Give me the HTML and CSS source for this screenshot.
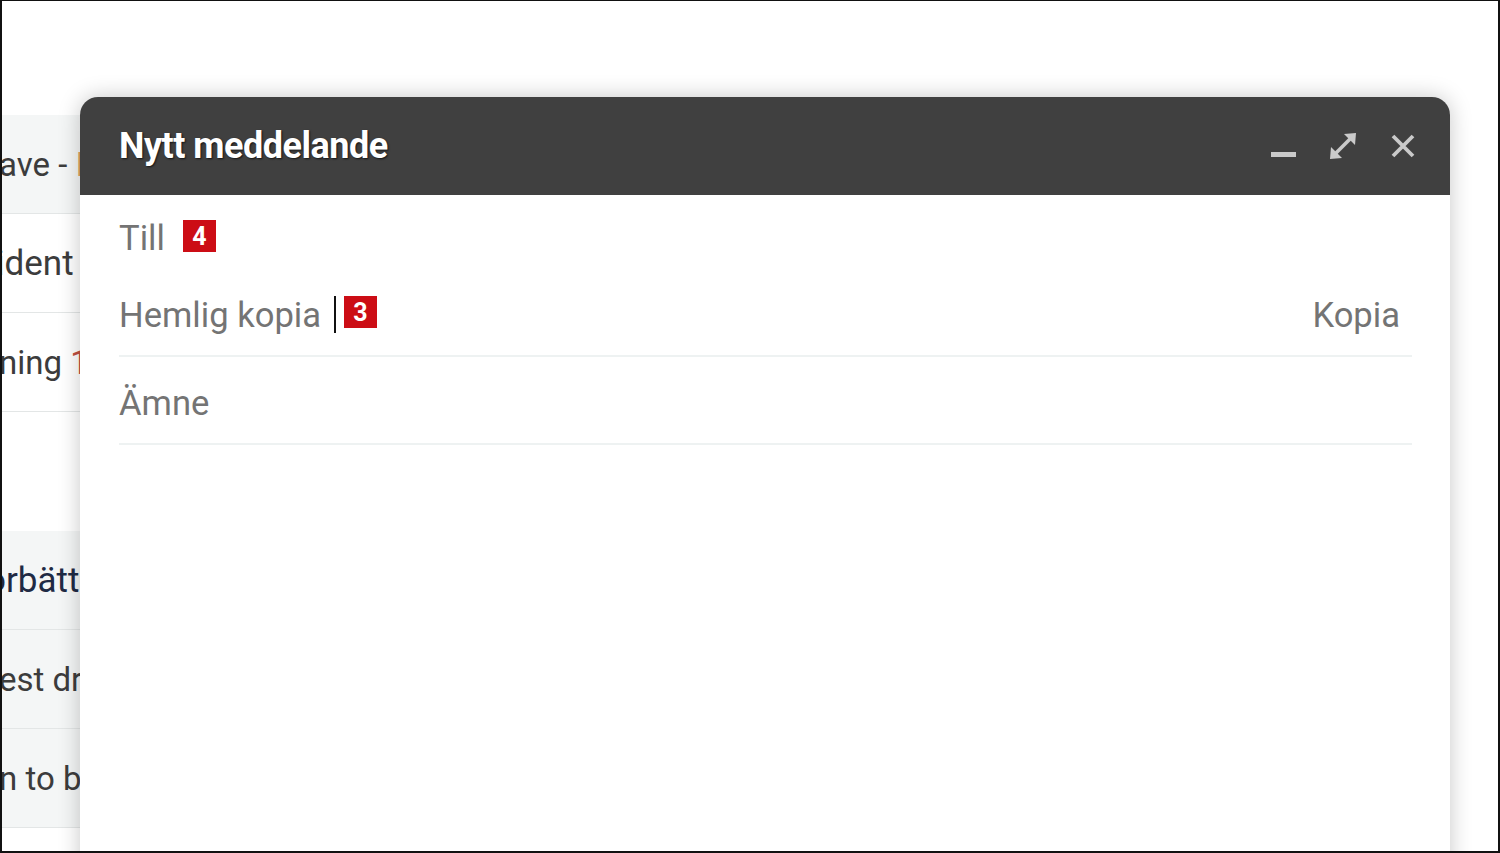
FILE: index.html
```html
<!DOCTYPE html>
<html lang="sv">
<head>
    <meta charset="UTF-8">
    <title>Nytt meddelande</title>
    <link rel="stylesheet" href="styles.css">
</head>
<body>
    <div class="frame">
        <div class="inbox">
            <div class="row shade"><span class="cut">ave - <span class="tag-orange">I</span></span></div>
            <div class="row"><span class="cut shift">ident</span></div>
            <div class="row"><span class="cut">ning <span class="tag-red">1</span></span></div>
            <div class="row tall"></div>
            <div class="row shade"><span class="cut navy wide">örbätt</span></div>
            <div class="row shade"><span class="cut">est dr<span class="tag-orange">i</span></span></div>
            <div class="row shade"><span class="cut">n to b</span></div>
        </div>

        <div class="compose">
            <div class="compose-head">
                <div class="compose-title">Nytt meddelande</div>
                <div class="head-icons">
                    <svg class="icon" width="28" height="28" viewBox="0 0 28 28"><rect x="2" y="20" width="25" height="5" fill="#cacaca"/></svg>
                    <svg class="icon" width="28" height="28" viewBox="0 0 28 28">
                        <line x1="6" y1="22" x2="22" y2="6" stroke="#cacaca" stroke-width="3.5"/>
                        <polygon points="15,2 27,1 26,13" fill="#cacaca"/>
                        <polygon points="2,15 1,27 13,26" fill="#cacaca"/>
                    </svg>
                    <svg class="icon" width="28" height="28" viewBox="0 0 28 28">
                        <path d="M4 4 L24 24 M24 4 L4 24" stroke="#cacaca" stroke-width="3.8"/>
                    </svg>
                </div>
            </div>
            <div class="compose-body">
                <div class="field first">
                    <span class="label">Till</span>
                    <span class="badge">4</span>
                </div>
                <div class="field lined">
                    <span class="label">Hemlig kopia</span>
                    <span class="caret"></span>
                    <span class="badge">3</span>
                    <span class="label right">Kopia</span>
                </div>
                <div class="field lined subject">
                    <span class="label">Ämne</span>
                </div>
            </div>
        </div>
    </div>
</body>
</html>
```

FILE: styles.css
```css
body { margin: 0; background: #fff; font-family: Roboto, "Liberation Sans", sans-serif; }
.frame { position: relative; width: 1500px; height: 853px; box-sizing: border-box; border: 2px solid #111; border-top-width: 1px; overflow: hidden; background: #fff; }

.inbox { padding-top: 114px; width: 1440px; }
.row { height: 98px; border-bottom: 1px solid #e3e6e6; display: flex; align-items: center; font-size: 33px; color: #3c3c3c; white-space: nowrap; }
.row.tall { height: 119px; border-bottom: none; }
.row.shade { background: #f4f6f6; }
.cut { margin-left: -3px; }
.cut.shift { margin-left: -6px; font-size: 35px; }
.cut.wide { margin-left: -16px; font-size: 35px; }
.navy { color: #1f2a44; }
.tag-orange { color: #e0a060; }
.tag-red { color: #c05040; }

.compose { position: absolute; left: 78px; top: 96px; width: 1370px; height: 800px; background: #fff; border-radius: 18px 18px 0 0; box-shadow: 0 0 22px rgba(0, 0, 0, 0.22); }
.compose-head { height: 98px; background: #404040; border-radius: 18px 18px 0 0; display: flex; align-items: center; padding: 0 33px 0 39px; }
.compose-title { flex: 1; color: #fff; font-weight: 700; font-size: 36px; letter-spacing: -0.5px; text-shadow: 1px 1px 2px rgba(0, 0, 0, 0.7); }
.head-icons { display: flex; gap: 32px; align-items: center; }
.icon { display: block; }

.compose-body { padding: 0 38px 0 39px; }
.field { display: flex; align-items: center; height: 80px; }
.field.first { height: 80px; padding-top: 6px; box-sizing: border-box; }
.field.lined { border-bottom: 2px solid #eef2f2; }
.field.subject { height: 88px; padding-top: 6px; box-sizing: border-box; }
.label { font-size: 34.6px; color: #747474; }
.label.right { margin-left: auto; margin-right: 12px; }
.badge { display: inline-flex; align-items: center; justify-content: center; width: 33px; height: 32px; background: #cc0d15; color: #fff; font-weight: 700; font-size: 25px; margin-left: 18px; margin-top: -4px; }
.field.lined .badge { margin-left: 8px; margin-top: -6px; }
.caret { width: 2px; height: 37px; background: #111; margin-left: 13px; margin-top: -2px; }
```
